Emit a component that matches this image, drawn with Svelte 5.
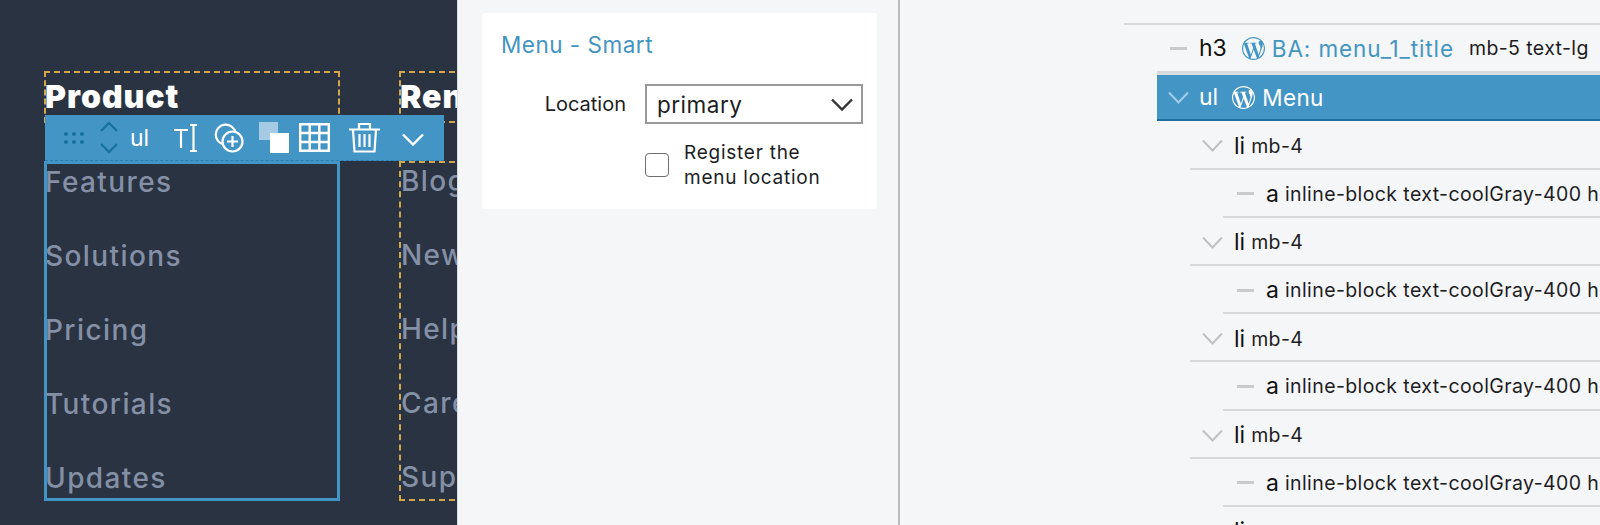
<script>
	const wpPath =
		'M21.469 6.825c.84 1.537 1.318 3.3 1.318 5.175 0 3.979-2.156 7.456-5.363 9.325l3.295-9.527c.615-1.54.82-2.771.82-3.864 0-.405-.026-.78-.07-1.11m-7.981.105c.647-.03 1.232-.105 1.232-.105.582-.075.514-.93-.067-.899 0 0-1.755.135-2.88.135-1.064 0-2.85-.15-2.85-.15-.585-.03-.661.855-.075.885 0 0 .54.061 1.125.09l1.68 4.605-2.37 7.08L5.354 6.9c.649-.03 1.234-.1 1.234-.1.585-.075.516-.93-.065-.896 0 0-1.746.138-2.874.138-.2 0-.438-.008-.69-.015C4.911 3.15 8.235 1.215 12 1.215c2.809 0 5.365 1.072 7.286 2.833-.046-.003-.091-.009-.141-.009-1.06 0-1.812.923-1.812 1.914 0 .89.513 1.643 1.06 2.531.411.72.89 1.643.89 2.977 0 .915-.354 1.994-.821 3.479l-1.075 3.585-3.9-11.61.001.014zM12 22.784c-1.059 0-2.081-.153-3.048-.437l3.237-9.406 3.315 9.087c.024.053.05.101.078.149-1.12.393-2.325.609-3.582.609M1.211 12c0-1.564.336-3.05.935-4.39L7.29 21.709C3.694 19.96 1.212 16.271 1.211 12M12 0C5.385 0 0 5.385 0 12s5.385 12 12 12 12-5.385 12-12S18.615 0 12 0';

	const product = ['Features', 'Solutions', 'Pricing', 'Tutorials', 'Updates'];
	const resources = ['Blog', 'Newsletter', 'Help', 'Careers', 'Support'];

	const liRow = { tag: 'li', depth: 2, open: true, classes: 'mb-4' };
	const aRow = { tag: 'a', depth: 3, classes: 'inline-block text-coolGray-400 hover:text-coolGray-500' };
	const rows = [liRow, aRow, liRow, aRow, liRow, aRow, liRow, aRow, { tag: 'li', depth: 2, open: true, classes: '' }];
</script>

<div class="app">
	<section class="preview">
		<div class="columns">
			<div class="col">
				<h3 class="col__title">Product</h3>
				<ul class="col__list col__list--selected">
					{#each product as item}
						<li>{item}</li>
					{/each}
				</ul>
			</div>
			<div class="col">
				<h3 class="col__title">Rentals</h3>
				<ul class="col__list">
					{#each resources as item}
						<li>{item}</li>
					{/each}
				</ul>
			</div>
		</div>

		<div class="toolbar">
			<svg class="tb-dots" width="20" height="14" viewBox="0 0 20 14" fill="#14709d">
				<circle cx="2" cy="3" r="2" /><circle cx="10" cy="3" r="2" /><circle cx="18" cy="3" r="2" />
				<circle cx="2" cy="11" r="2" /><circle cx="10" cy="11" r="2" /><circle cx="18" cy="11" r="2" />
			</svg>
			<svg class="tb-move" width="18" height="33" viewBox="0 0 18 33" fill="none" stroke="#14709d" stroke-width="2">
				<path d="M1 10 9 2l8 8M1 23l8 8 8-8" />
			</svg>
			<span class="tb-tag">ul</span>
			<svg class="tb-text" width="25" height="30" viewBox="0 0 25 30" fill="none" stroke="#fff" stroke-width="2.200">
				<path d="M1 7h14M8 7v18M17 2h7M20.500 2v26M17 28h7" />
			</svg>
			<svg class="tb-add" width="31" height="31" viewBox="0 0 31 31" fill="none" stroke="#fff" stroke-width="2.200">
				<path d="M11 22.500a10 10 0 1 1 11.500-12" />
				<circle cx="19.500" cy="19.500" r="10" />
				<path d="M14 19.500h11M19.500 14v11" />
			</svg>
			<svg class="tb-layers" width="30" height="31" viewBox="0 0 30 31">
				<rect x="0" y="0" width="19" height="18" fill="#a5cae3" />
				<rect x="11" y="11" width="19" height="20" fill="#fff" />
			</svg>
			<svg class="tb-grid" width="31" height="29" viewBox="0 0 31 29" fill="none" stroke="#fff" stroke-width="2.400">
				<path d="M1.200 1.200h28.600v26.600H1.200zM1.200 10h28.600M1.200 19h28.600M10.700 1.200v26.600M20.300 1.200v26.600" />
			</svg>
			<svg class="tb-trash" width="31" height="31" viewBox="0 0 31 31" fill="none" stroke="#fff" stroke-width="2.200">
				<path d="M0 7.500h31M10 7V2h11v5M4 8l1.500 21.500h20L27 8M10.500 12v13M15.500 12v13M20.500 12v13" />
			</svg>
			<svg class="tb-more" width="22" height="13" viewBox="0 0 22 13" fill="none" stroke="#fff" stroke-width="2.400">
				<path d="M1 1.500 11 11.500 21 1.500" />
			</svg>
		</div>
	</section>

	<section class="props">
		<div class="card">
			<div class="card__title">Menu - Smart</div>
			<div class="field">
				<span class="field__label">Location</span>
				<div class="select">
					<span>primary</span>
					<svg width="22" height="13" viewBox="0 0 22 13" fill="none" stroke="#333" stroke-width="2.400">
						<path d="M1 1.500 11 11.500 21 1.500" />
					</svg>
				</div>
			</div>
			<div class="check">
				<span class="check__box"></span>
				<span class="check__label">Register the<br />menu location</span>
			</div>
		</div>
	</section>

	<section class="tree">
		<div class="row row--head"></div>
		<div class="row depth-1">
			<span class="dash"></span>
			<span class="tag tag--h3">h3</span>
			<svg class="wp" width="23" height="23" viewBox="0 0 24 24" fill="#4395c5"><path d={wpPath} /></svg>
			<span class="name">BA: menu_1_title</span>
			<span class="classes">mb-5 text-lg</span>
		</div>
		<div class="row row--selected depth-1">
			<svg class="chev chev--sel" width="21" height="13" viewBox="0 0 21 13" fill="none" stroke="#a3cce6" stroke-width="2">
				<path d="M1 1.500 10.500 11.500 20 1.500" />
			</svg>
			<span class="tag tag--ul">ul</span>
			<svg class="wp wp--sel" width="23" height="23" viewBox="0 0 24 24" fill="#fff"><path d={wpPath} /></svg>
			<span class="name name--sel">Menu</span>
		</div>
		{#each rows as row}
			<div class="row depth-{row.depth}">
				{#if row.open}
					<svg class="chev" width="21" height="13" viewBox="0 0 21 13" fill="none" stroke="#bfc1c4" stroke-width="2">
						<path d="M1 1.500 10.500 11.500 20 1.500" />
					</svg>
				{:else}
					<span class="dash"></span>
				{/if}
				<span class="tag">{row.tag}</span>
				<span class="classes">{row.classes}</span>
			</div>
		{/each}
	</section>
</div>

<style>
	:global(body) {
		margin: 0;
	}
	.app {
		display: flex;
		height: 525px;
		overflow: hidden;
		font-family: Inter, 'Liberation Sans', sans-serif;
		background: #f5f6f8;
		color: #1d1d1f;
	}

	.preview {
		position: relative;
		flex: 0 0 457px;
		overflow: hidden;
		background: #2a3342;
	}
	.columns {
		display: flex;
		gap: 59px;
		padding: 71px 0 0 44px;
		width: 700px;
	}
	.col {
		flex: 0 0 296px;
	}
	.col__title {
		box-sizing: border-box;
		margin: 0;
		height: 52px;
		border: 2px dashed #d3a747;
		font-size: 32px;
		font-weight: 900;
		line-height: 48px;
		text-indent: -1px;
		letter-spacing: 1px;
		color: #fff;
	}
	.col__list {
		list-style: none;
		margin: 38px 0 0;
		padding: 0;
		height: 340px;
		box-sizing: border-box;
		border: 2px dashed #d3a747;
		font-size: 28px;
		font-weight: 500;
		letter-spacing: 1.400px;
		color: #8490a6;
	}
	.col__list--selected {
		border: 3px solid #4395c5;
	}
	.col__list li {
		height: 74px;
		line-height: 36px;
	}
	.col__list--selected li {
		margin-left: -2px;
	}

	.toolbar {
		position: absolute;
		left: 45px;
		top: 115px;
		width: 399px;
		height: 46px;
		display: flex;
		align-items: center;
		background: #4395c5;
		border-bottom: 1px dashed #2d7eae;
		box-sizing: border-box;
	}
	.toolbar svg {
		flex: none;
	}
	.tb-dots {
		margin-left: 19px;
	}
	.tb-move {
		margin-left: 16px;
	}
	.tb-tag {
		margin-left: 12px;
		width: 43px;
		font-size: 23px;
		color: #fff;
	}
	.tb-add {
		margin-left: 15px;
	}
	.tb-layers {
		margin-left: 15px;
	}
	.tb-grid {
		margin-left: 10px;
	}
	.tb-trash {
		margin-left: 19px;
	}
	.tb-more {
		margin-left: 22px;
		margin-top: 4px;
	}

	.props {
		flex: 0 0 440px;
		border-left: 1px solid #d7dde6;
		border-right: 2px solid #b9bcc0;
		padding-top: 13px;
		background: #f4f6f8;
	}
	.card {
		box-sizing: border-box;
		margin-left: 24px;
		width: 395px;
		height: 196px;
		padding: 18px 19px;
		background: #fff;
		border-radius: 3px;
	}
	.card__title {
		font-size: 22.500px;
		line-height: 28px;
		letter-spacing: 0.5px;
		color: #4395c1;
	}
	.field {
		display: flex;
		align-items: center;
		margin-top: 25px;
	}
	.field__label {
		flex: none;
		width: 125px;
		text-align: right;
		margin-right: 19px;
		font-size: 20px;
	}
	.select {
		flex: none;
		box-sizing: border-box;
		width: 218px;
		height: 40px;
		padding: 0 8px 0 10px;
		display: flex;
		align-items: center;
		justify-content: space-between;
		border: 2px solid #999;
		font-size: 22.500px;
		letter-spacing: 0.5px;
	}
	.check {
		display: flex;
		align-items: center;
		margin: 16px 0 0 144px;
	}
	.check__box {
		flex: none;
		box-sizing: border-box;
		width: 24px;
		height: 24px;
		border: 1.500px solid #707070;
		border-radius: 4px;
	}
	.check__label {
		margin-left: 15px;
		font-size: 19px;
		line-height: 25px;
		letter-spacing: 0.75px;
	}

	.tree {
		flex: 1;
		min-width: 0;
		overflow: hidden;
	}
	.row {
		box-sizing: border-box;
		height: 48.200px;
		display: flex;
		align-items: center;
		white-space: nowrap;
		border-bottom: 2px solid #d8d9db;
	}
	.row > * {
		flex: none;
	}
	.row--head {
		height: 25px;
		margin-left: 224px;
	}
	.depth-1 {
		margin-left: 257px;
		padding-left: 13px;
	}
	.depth-2 {
		margin-left: 290px;
		padding: 3px 0 0 12px;
	}
	.depth-3 {
		margin-left: 323px;
		padding: 2px 0 0 14px;
	}
	.row--selected {
		padding-left: 11px;
		background: #4395c5;
		border-top: 2px solid #dcdde0;
		border-bottom: 2px solid #1d6f9f;
		color: #fff;
	}
	.dash {
		width: 17px;
		height: 3px;
		background: #c9cacc;
		margin-right: 12px;
	}
	.chev {
		margin-right: 11px;
	}
	.chev--sel {
		margin-right: 10px;
	}
	.tag {
		font-size: 23px;
		font-weight: 400;
		color: #111;
		margin-right: 6px;
	}
	.tag--h3 {
		margin-right: 15px;
	}
	.tag--ul {
		margin-right: 14px;
		color: #fff;
	}
	.wp {
		margin-right: 7px;
	}
	.name {
		font-size: 22.500px;
		letter-spacing: 0.9px;
		color: #4395c1;
		margin-right: 15px;
	}
	.name--sel {
		letter-spacing: 0.4px;
		color: #fff;
	}
	.classes {
		font-size: 19.500px;
		letter-spacing: 0.4px;
	}
</style>
